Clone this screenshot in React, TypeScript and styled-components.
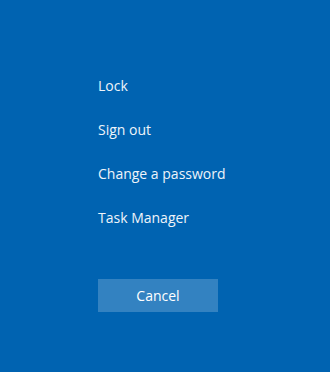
import styled, { createGlobalStyle } from 'styled-components';

const GlobalStyle = createGlobalStyle`
  html, body {
    margin: 0;
    padding: 0;
    background: #0063b1;
  }
`;

const Screen = styled.div`
  width: 330px;
  height: 372px;
  background: #0063b1;
  box-sizing: border-box;
  padding: 76px 0 0 98px;
  font-family: "Open Sans", "Noto Sans", sans-serif;
  color: #ffffff;
`;

const Options = styled.ul`
  list-style: none;
  margin: 0;
  padding: 0;
  display: flex;
  flex-direction: column;
  gap: 24px;
`;

const Option = styled.li`
  font-size: 14px;
  line-height: 20px;
  color: #eef4fa;
`;

const CancelButton = styled.button`
  display: block;
  margin-top: 51px;
  width: 120px;
  height: 33px;
  border: none;
  background: #3382c1;
  color: #ffffff;
  font-family: inherit;
  font-size: 14px;
  padding: 0;
`;

const options = ['Lock', 'Sign out', 'Change a password', 'Task Manager'];

export default function App() {
  return (
    <>
      <GlobalStyle />
      <Screen>
        <Options>
          {options.map((o) => (
            <Option key={o}>{o}</Option>
          ))}
        </Options>
        <CancelButton>Cancel</CancelButton>
      </Screen>
    </>
  );
}
